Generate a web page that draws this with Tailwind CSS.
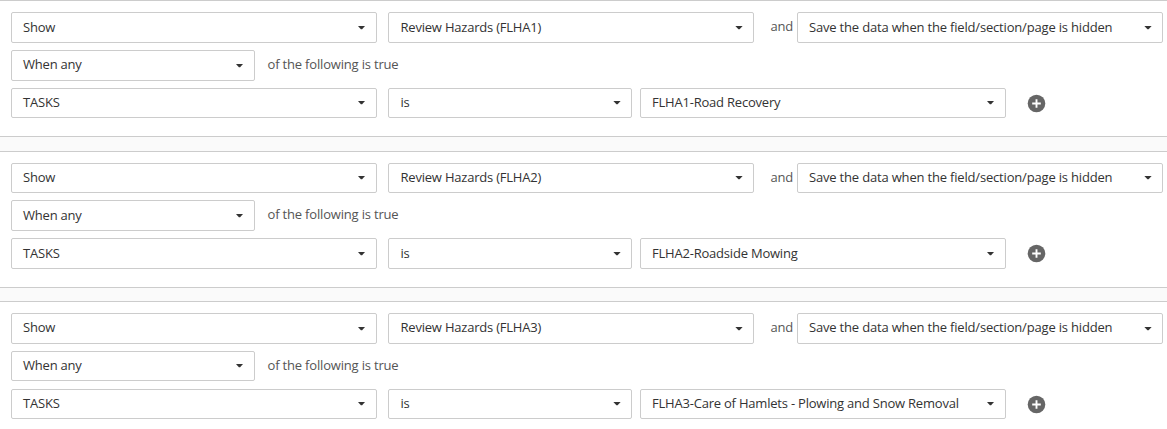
<!DOCTYPE html>
<html lang="en">
<head>
<meta charset="utf-8">
<title>Rules</title>
<script src="https://cdn.jsdelivr.net/npm/@tailwindcss/browser@4"></script>
</head>
<body class="h-[429px] overflow-hidden bg-white font-['Open_Sans',sans-serif] text-[13px] leading-[18px] tracking-[-0.21px] text-[#333]">
<svg class="hidden"><defs>
<symbol id="caret" viewBox="0 0 7 4"><path d="M0 0h7L4.1 3.3H2.9z" fill="#333"/></symbol>
<symbol id="caret-wide" viewBox="0 0 8 4"><path d="M.4 0h7.2L4.6 3.3H3.4z" fill="#333"/></symbol>
<symbol id="plus" viewBox="0 0 19 19"><circle cx="9.5" cy="9.5" r="8.8" fill="#666"/><path d="M9.5 5.2v8.6M5.2 9.5h8.6" stroke="#fff" stroke-width="1.9"/></symbol>
</defs></svg>

<section class="h-[137px] border-y border-[#ccc] pl-[11px] pt-[11px]">
  <div class="flex h-[38px] items-start">
    <div class="flex h-[31px] w-[366px] items-start justify-between rounded-[2px] border border-[#ccc] px-[11px] pt-[5px]"><span>Show</span><svg class="mt-[8px] h-[4px] w-[7px]"><use href="#caret"/></svg></div>
    <div class="ml-[11px] flex h-[31px] w-[366px] items-start justify-between rounded-[2px] border border-[#ccc] pl-[11.5px] pr-[10px] pt-[5px]"><span>Review Hazards (FLHA1)</span><svg class="mt-[8px] h-[4px] w-[8px]"><use href="#caret-wide"/></svg></div>
    <span class="w-[43px] pl-[16.5px] pt-[5px] text-[#555]">and</span>
    <div class="flex h-[31px] w-[366px] items-start justify-between rounded-[2px] border border-[#ccc] pl-[11px] pr-[10px] pt-[5px]"><span class="tracking-[-0.18px]">Save the data when the field/section/page is hidden</span><svg class="mt-[8px] h-[4px] w-[8px]"><use href="#caret-wide"/></svg></div>
  </div>
  <div class="flex h-[38px] items-start">
    <div class="flex h-[31px] w-[244px] items-start justify-between rounded-[2px] border border-[#ccc] px-[11px] pt-[4px]"><span>When any</span><svg class="mt-[9px] h-[4px] w-[7px]"><use href="#caret"/></svg></div>
    <span class="pl-[12.5px] pt-[5px] tracking-[-0.18px] text-[#555]">of the following is true</span>
  </div>
  <div class="flex items-start">
    <div class="flex h-[30px] w-[366px] items-start justify-between rounded-[2px] border border-[#ccc] px-[11px] pt-[4px]"><span>TASKS</span><svg class="mt-[8px] h-[4px] w-[7px]"><use href="#caret"/></svg></div>
    <div class="ml-[11px] flex h-[30px] w-[244px] items-start justify-between rounded-[2px] border border-[#ccc] pl-[11.5px] pr-[10px] pt-[4px]"><span>is</span><svg class="mt-[8px] h-[4px] w-[8px]"><use href="#caret-wide"/></svg></div>
    <div class="ml-[8px] flex h-[30px] w-[366px] items-start justify-between rounded-[2px] border border-[#ccc] px-[11px] pt-[4px]"><span>FLHA1-Road Recovery</span><svg class="mt-[8px] h-[4px] w-[7px]"><use href="#caret"/></svg></div>
    <svg class="ml-[21px] mt-[6px] size-[19px]"><use href="#plus"/></svg>
  </div>
</section>
<div class="h-[14px] bg-[#fafafa]"></div>
<section class="h-[137px] border-y border-[#ccc] pl-[11px] pt-[11px]">
  <div class="flex h-[37px] items-start">
    <div class="flex h-[30px] w-[366px] items-start justify-between rounded-[2px] border border-[#ccc] px-[11px] pt-[4px]"><span>Show</span><svg class="mt-[8px] h-[4px] w-[7px]"><use href="#caret"/></svg></div>
    <div class="ml-[11px] flex h-[30px] w-[366px] items-start justify-between rounded-[2px] border border-[#ccc] pl-[11.5px] pr-[10px] pt-[4px]"><span>Review Hazards (FLHA2)</span><svg class="mt-[8px] h-[4px] w-[8px]"><use href="#caret-wide"/></svg></div>
    <span class="w-[43px] pl-[16.5px] pt-[5px] text-[#555]">and</span>
    <div class="flex h-[30px] w-[366px] items-start justify-between rounded-[2px] border border-[#ccc] pl-[11px] pr-[10px] pt-[4px]"><span class="tracking-[-0.18px]">Save the data when the field/section/page is hidden</span><svg class="mt-[8px] h-[4px] w-[8px]"><use href="#caret-wide"/></svg></div>
  </div>
  <div class="flex h-[38px] items-start">
    <div class="flex h-[31px] w-[244px] items-start justify-between rounded-[2px] border border-[#ccc] px-[11px] pt-[5px]"><span>When any</span><svg class="mt-[8px] h-[4px] w-[7px]"><use href="#caret"/></svg></div>
    <span class="pl-[12.5px] pt-[5px] tracking-[-0.18px] text-[#555]">of the following is true</span>
  </div>
  <div class="flex items-start">
    <div class="flex h-[31px] w-[366px] items-start justify-between rounded-[2px] border border-[#ccc] px-[11px] pt-[5px]"><span>TASKS</span><svg class="mt-[8px] h-[4px] w-[7px]"><use href="#caret"/></svg></div>
    <div class="ml-[11px] flex h-[31px] w-[244px] items-start justify-between rounded-[2px] border border-[#ccc] pl-[11.5px] pr-[10px] pt-[5px]"><span>is</span><svg class="mt-[8px] h-[4px] w-[8px]"><use href="#caret-wide"/></svg></div>
    <div class="ml-[8px] flex h-[31px] w-[366px] items-start justify-between rounded-[2px] border border-[#ccc] px-[11px] pt-[5px]"><span>FLHA2-Roadside Mowing</span><svg class="mt-[8px] h-[4px] w-[7px]"><use href="#caret"/></svg></div>
    <svg class="ml-[21px] mt-[6px] size-[19px]"><use href="#plus"/></svg>
  </div>
</section>
<div class="h-[13px] bg-[#fafafa]"></div>
<section class="h-[137px] border-y border-[#ccc] pl-[11px] pt-[11px]">
  <div class="flex h-[38px] items-start">
    <div class="flex h-[31px] w-[366px] items-start justify-between rounded-[2px] border border-[#ccc] px-[11px] pt-[4px]"><span>Show</span><svg class="mt-[9px] h-[4px] w-[7px]"><use href="#caret"/></svg></div>
    <div class="ml-[11px] flex h-[31px] w-[366px] items-start justify-between rounded-[2px] border border-[#ccc] pl-[11.5px] pr-[10px] pt-[4px]"><span>Review Hazards (FLHA3)</span><svg class="mt-[9px] h-[4px] w-[8px]"><use href="#caret-wide"/></svg></div>
    <span class="w-[43px] pl-[16.5px] pt-[5px] text-[#555]">and</span>
    <div class="flex h-[31px] w-[366px] items-start justify-between rounded-[2px] border border-[#ccc] pl-[11px] pr-[10px] pt-[4px]"><span class="tracking-[-0.18px]">Save the data when the field/section/page is hidden</span><svg class="mt-[9px] h-[4px] w-[8px]"><use href="#caret-wide"/></svg></div>
  </div>
  <div class="flex h-[38px] items-start">
    <div class="flex h-[30px] w-[244px] items-start justify-between rounded-[2px] border border-[#ccc] px-[11px] pt-[4px]"><span>When any</span><svg class="mt-[8px] h-[4px] w-[7px]"><use href="#caret"/></svg></div>
    <span class="pl-[12.5px] pt-[5px] tracking-[-0.18px] text-[#555]">of the following is true</span>
  </div>
  <div class="flex items-start">
    <div class="flex h-[30px] w-[366px] items-start justify-between rounded-[2px] border border-[#ccc] px-[11px] pt-[4px]"><span>TASKS</span><svg class="mt-[8px] h-[4px] w-[7px]"><use href="#caret"/></svg></div>
    <div class="ml-[11px] flex h-[30px] w-[244px] items-start justify-between rounded-[2px] border border-[#ccc] pl-[11.5px] pr-[10px] pt-[4px]"><span>is</span><svg class="mt-[8px] h-[4px] w-[8px]"><use href="#caret-wide"/></svg></div>
    <div class="ml-[8px] flex h-[30px] w-[366px] items-start justify-between rounded-[2px] border border-[#ccc] px-[11px] pt-[4px]"><span>FLHA3-Care of Hamlets - Plowing and Snow Removal</span><svg class="mt-[8px] h-[4px] w-[7px]"><use href="#caret"/></svg></div>
    <svg class="ml-[21px] mt-[6px] size-[19px]"><use href="#plus"/></svg>
  </div>
</section>
</body>
</html>
